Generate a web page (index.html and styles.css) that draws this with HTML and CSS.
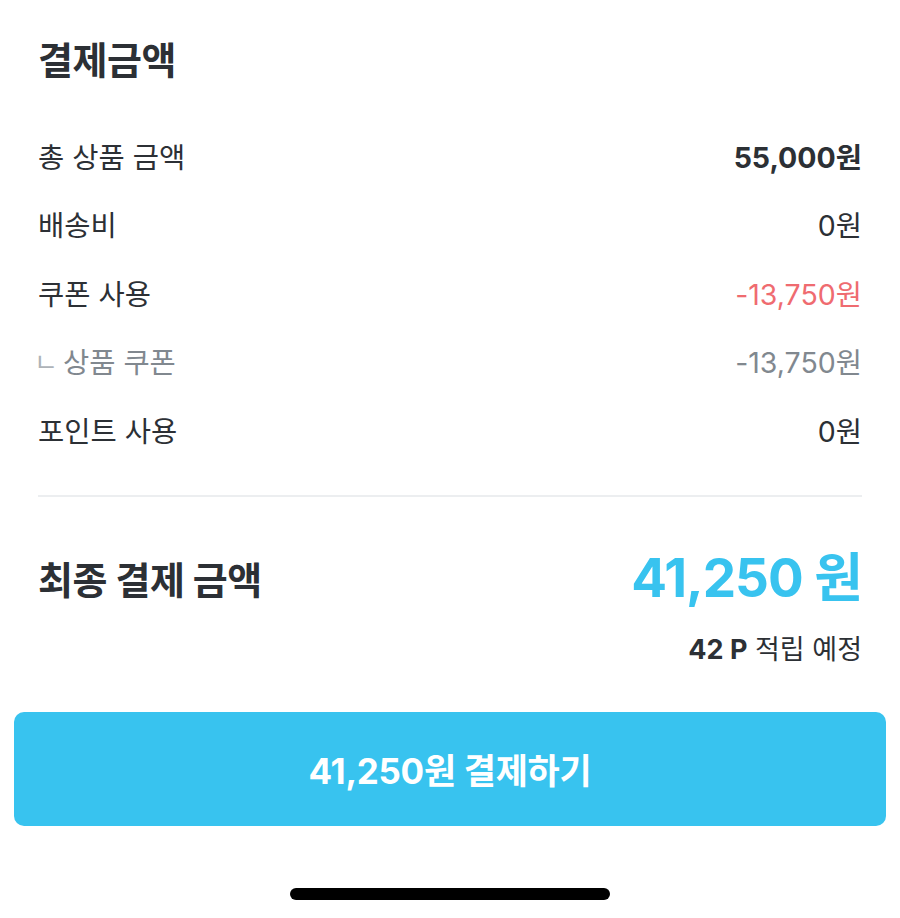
FILE: index.html
```html
<!DOCTYPE html>
<html lang="ko">
<head>
<meta charset="utf-8">
<title>결제금액</title>
<link rel="stylesheet" href="styles.css">
</head>
<body>
<div class="page">
  <section class="summary">
    <h2 class="title">결제금액</h2>
    <div class="rows">
      <div class="row"><span class="label">총 상품 금액</span><span class="value strong">55,000원</span></div>
      <div class="row"><span class="label">배송비</span><span class="value">0원</span></div>
      <div class="row"><span class="label">쿠폰 사용</span><span class="value red">-13,750원</span></div>
      <div class="row sub"><span class="label"><span class="corner">ㄴ</span>상품 쿠폰</span><span class="value">-13,750원</span></div>
      <div class="row"><span class="label">포인트 사용</span><span class="value">0원</span></div>
    </div>
    <div class="divider"></div>
    <div class="final">
      <span class="final-label">최종 결제 금액</span>
      <div class="final-right">
        <span class="final-amount">41,250 원</span>
        <span class="points"><b>42 P</b> 적립 예정</span>
      </div>
    </div>
  </section>
  <div class="action">
    <button class="pay">41,250원 결제하기</button>
  </div>
  <div class="home"><span class="home-bar"></span></div>
</div>
</body>
</html>
```

FILE: styles.css
```css
* { box-sizing: border-box; }
html, body { margin: 0; padding: 0; background: #ffffff; }
body {
  font-family: Inter, "Noto Sans CJK KR", sans-serif;
  color: #2c3035;
  width: 900px;
  height: 918px;
  overflow: hidden;
}
.page { display: flex; flex-direction: column; }
.summary { padding: 38px 38px 0; }
.title {
  margin: 0;
  font-size: 38px;
  line-height: 44px;
  font-weight: 700;
  letter-spacing: -0.5px;
}
.rows { margin-top: 39px; display: flex; flex-direction: column; }
.row {
  height: 68.5px;
  display: flex;
  align-items: center;
  justify-content: space-between;
  font-size: 28.5px;
}
.label { font-weight: 400; display: flex; align-items: center; }
.value { font-weight: 400; }
.value.strong { font-weight: 700; }
.value.red { color: #ef6b70; }
.row.sub { color: #81888f; }
.corner {
  font-size: 26px;
  line-height: 1;
  color: #aeb3b8;
  margin-left: -4px;
  margin-right: 5px;
  position: relative;
  top: 2px;
}
.divider { margin-top: 31px; height: 2px; background: #eceef0; }
.final {
  display: flex;
  justify-content: space-between;
  align-items: flex-start;
  margin-top: 48px;
}
.final-label {
  font-size: 38px;
  line-height: 70px;
  font-weight: 700;
  letter-spacing: -0.5px;
}
.final-right { display: flex; flex-direction: column; align-items: flex-end; }
.final-amount {
  font-size: 53px;
  line-height: 66px;
  font-weight: 700;
  color: #38c3ef;
  letter-spacing: -1px;
}
.points {
  margin-top: 21px;
  font-size: 27px;
  line-height: 36px;
}
.points b { font-weight: 700; }
.action { padding: 44px 14px 0; }
.pay {
  width: 100%;
  height: 114px;
  border: 0;
  border-radius: 10px;
  background: #38c3ef;
  color: #ffffff;
  font-family: Inter, "Noto Sans CJK KR", sans-serif;
  font-size: 35px;
  font-weight: 700;
  letter-spacing: -0.3px;
}
.home { display: flex; justify-content: center; padding-top: 62px; }
.home-bar { width: 320px; height: 12px; border-radius: 6px; background: #000; }
```
